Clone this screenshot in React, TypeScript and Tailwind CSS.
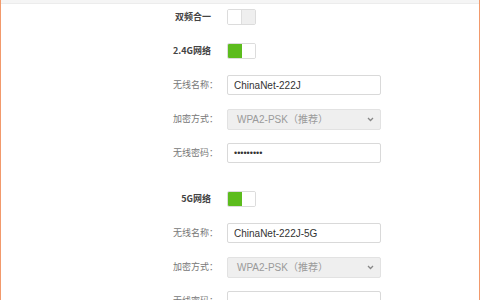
import React from "react";

const cjk = '"Noto Sans CJK SC", "Noto Sans", sans-serif';
const latin = '"Liberation Sans", "Noto Sans CJK SC", sans-serif';

// Interruptor de dos mitades (izquierda activa = verde)
function Toggle({ on }: { on: boolean }) {
  return (
    <div className="flex h-[16px] w-[29px] overflow-hidden rounded-[2px] border border-[#dcdcdc] bg-white">
      <div className={on ? "w-[14px] bg-[#5cbc1d]" : "w-[14px] border-r border-[#dedede] bg-white"} />
      <div className={on ? "flex-1 bg-white" : "flex-1 bg-[#efefef]"} />
    </div>
  );
}

function Row({ label, bold, children }: { label: string; bold?: boolean; children: React.ReactNode }) {
  return (
    <div className="flex h-[34px] items-center">
      <div
        className={
          bold
            ? "w-[218px] pr-[7px] text-right text-[9px] font-bold text-[#444]"
            : "w-[218px] text-right text-[9px] text-[#777]"
        }
        style={{ fontFamily: cjk }}
      >
        {label}
      </div>
      <div className="ml-[9px]">{children}</div>
    </div>
  );
}

function TextBox({ value }: { value: string }) {
  return (
    <input
      readOnly
      type="text"
      value={value}
      className="block h-[20px] w-[154px] rounded-[2px] border border-[#d9d9d9] bg-white px-[6px] text-[10px] text-[#333] outline-none"
      style={{ fontFamily: latin }}
    />
  );
}

function PasswordBox({ dots }: { dots: number }) {
  return (
    <div className="flex h-[20px] w-[154px] items-center rounded-[2px] border border-[#d9d9d9] bg-white px-[6px]">
      <span className="text-[9px] leading-none text-[#333]" style={{ fontFamily: latin }}>
        {"•".repeat(dots)}
      </span>
    </div>
  );
}

function SelectBox() {
  return (
    <div className="flex h-[21px] w-[154px] items-center justify-between rounded-[2px] border border-[#e2e2e2] bg-[#efefef] pl-[9px] pr-[6px]">
      <span className="text-[10px] text-[#9a9a9a]" style={{ fontFamily: latin }}>
        WPA2-PSK（推荐）
      </span>
      <svg width="7" height="5" viewBox="0 0 7 5" fill="none">
        <path d="M1 1l2.5 2.5L6 1" stroke="#888" strokeWidth="1.3" />
      </svg>
    </div>
  );
}

export default function App() {
  return (
    <div className="h-[300px] w-[480px] overflow-hidden border-x border-[#f29a6c] bg-white">
      <div className="h-[4px] border-b border-[#ececec] bg-[#f5f5f5]" />
      <div className="-ml-px -mt-[4px]">
        <Row label="双频合一" bold>
          <Toggle on={false} />
        </Row>
        <Row label="2.4G网络" bold>
          <Toggle on />
        </Row>
        <Row label="无线名称：">
          <TextBox value="ChinaNet-222J" />
        </Row>
        <Row label="加密方式：">
          <SelectBox />
        </Row>
        <Row label="无线密码：">
          <PasswordBox dots={9} />
        </Row>

        <div className="mt-[12px]">
          <Row label="5G网络" bold>
            <Toggle on />
          </Row>
          <Row label="无线名称：">
            <TextBox value="ChinaNet-222J-5G" />
          </Row>
          <Row label="加密方式：">
            <SelectBox />
          </Row>
          <Row label="无线密码：">
            <PasswordBox dots={0} />
          </Row>
        </div>
      </div>
    </div>
  );
}
